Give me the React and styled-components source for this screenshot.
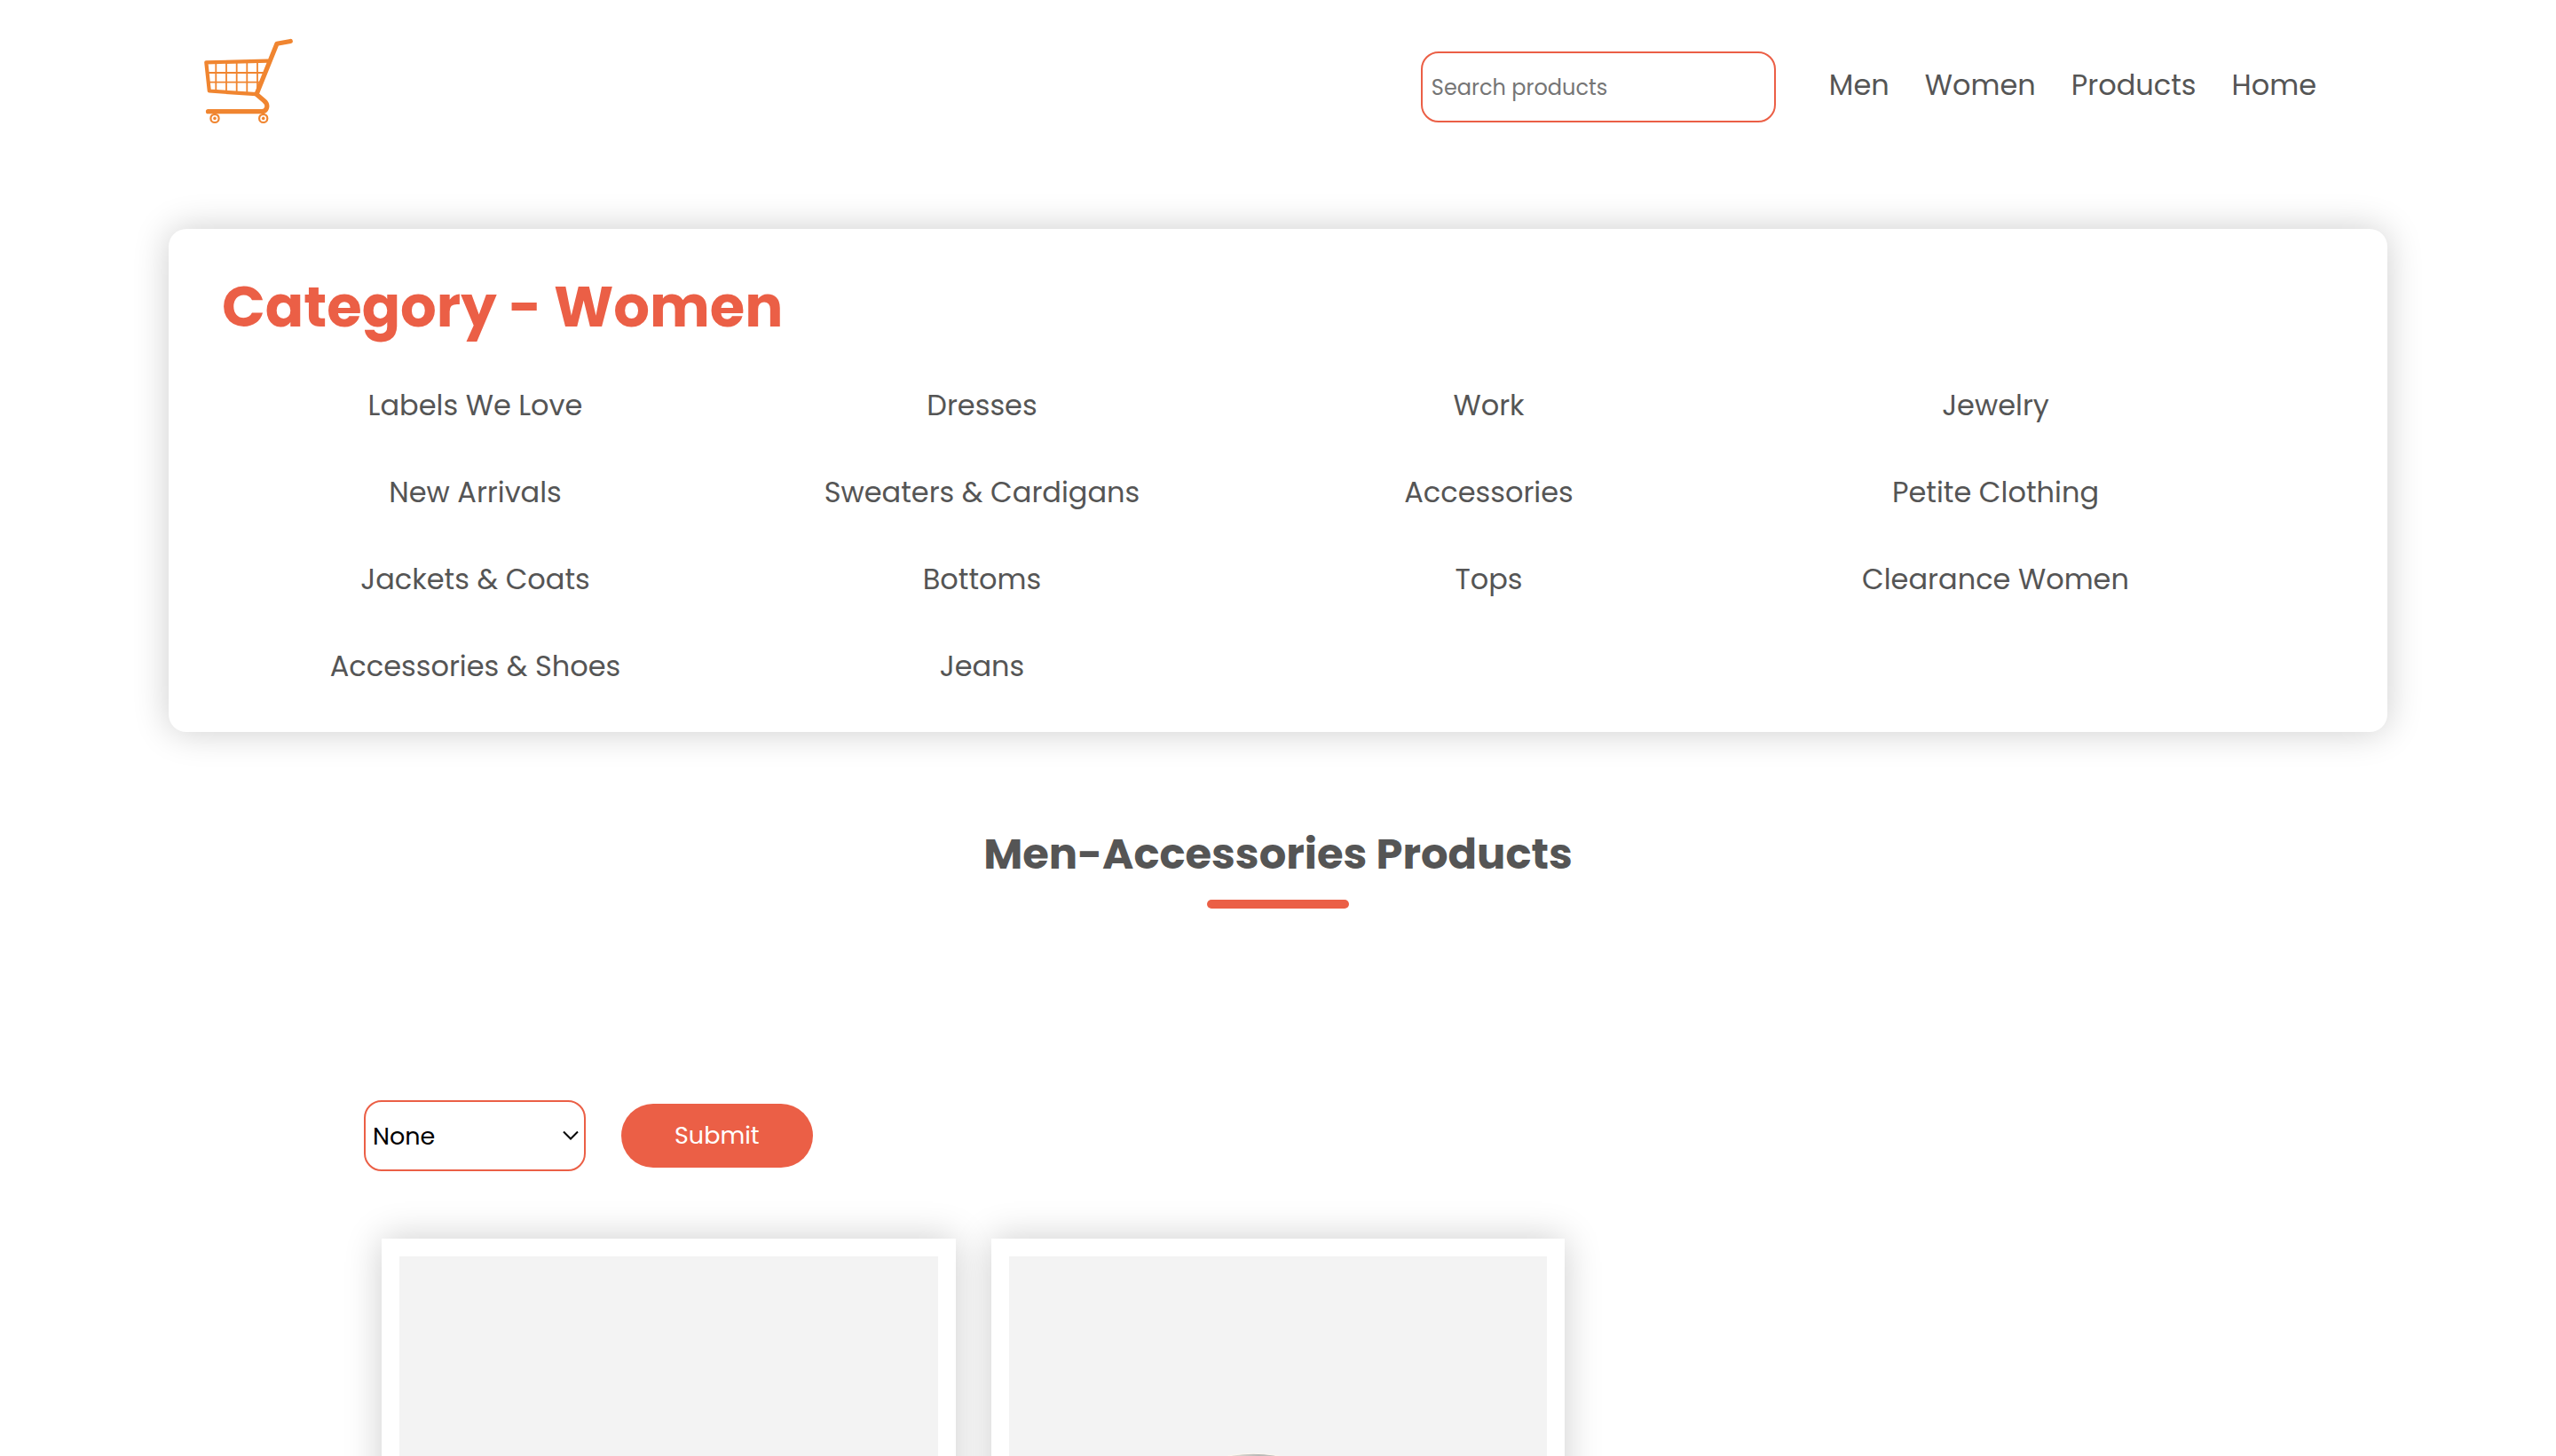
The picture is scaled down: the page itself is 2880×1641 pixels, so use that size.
import React from "react";
import styled, { createGlobalStyle } from "styled-components";

const accent = "#eb5f46";
const ink = "#555";

const GlobalStyle = createGlobalStyle`
  * { box-sizing: border-box; margin: 0; padding: 0; }
  body {
    background: #fff;
    color: ${ink};
    font-family: Poppins, Inter, sans-serif;
    font-size: 32px;
  }
  input, select, button { font-family: inherit; }
`;

const Container = styled.div`
  max-width: ${(p) => (p.$narrow ? "2160px" : "2600px")};
  margin: 0 auto;
  padding: 0 50px;
`;

const Header = styled.header`
  display: flex;
  align-items: center;
  justify-content: space-between;
  padding: 42px 80px 0 40px;
`;

const LogoLink = styled.a`
  display: block;
  line-height: 0;
`;

const HeaderRight = styled.div`
  display: flex;
  align-items: center;
  gap: 60px;
`;

const SearchInput = styled.input`
  width: 400px;
  height: 80px;
  padding: 0 10px;
  border: 2px solid ${accent};
  border-radius: 20px;
  background: #fff;
  color: ${ink};
  font-size: 24px;
  &::placeholder { color: #757575; opacity: 1; }
`;

const NavList = styled.ul`
  display: flex;
  gap: 40px;
  padding-bottom: 4px;
  list-style: none;
`;

const TextLink = styled.a`
  color: ${ink};
  font-size: 32px;
  line-height: 48px;
  text-decoration: none;
`;

const Panel = styled.section`
  margin-top: 104px;
  padding: 40px 60px 50px;
  border-radius: 20px;
  background: #fff;
  box-shadow: 0 0 40px rgba(0, 0, 0, 0.2);
`;

const PanelTitle = styled.h1`
  color: ${accent};
  font-size: 64px;
  font-weight: 700;
  line-height: 95px;
`;

const CategoryGrid = styled.ul`
  display: grid;
  grid-template-columns: repeat(4, 1fr);
  row-gap: 50px;
  margin-top: 40px;
  padding-right: 96px;
  list-style: none;
  text-align: center;
`;

const CategoryItem = styled.li`
  display: grid;
  height: 48px;
`;

const SectionTitle = styled.h2`
  display: flex;
  flex-direction: column;
  align-items: center;
  gap: 15px;
  margin-top: 102px;
  font-size: 48px;
  font-weight: 700;
  line-height: 72px;
  &::after {
    content: "";
    width: 160px;
    height: 10px;
    border-radius: 5px;
    background: ${accent};
  }
`;

const SortForm = styled.form`
  display: flex;
  align-items: center;
  gap: 40px;
  margin-top: 216px;
`;

const SelectBox = styled.label`
  display: grid;
  grid-template-columns: 250px;
  align-items: center;
  > * { grid-area: 1 / 1; }
  > svg { justify-self: end; margin-right: 8px; pointer-events: none; }
`;

const Select = styled.select`
  height: 80px;
  padding: 0 8px;
  border: 2px solid ${accent};
  border-radius: 20px;
  background: #fff;
  color: #000;
  font-size: 27px;
  appearance: none;
`;

const SubmitButton = styled.button`
  height: 72px;
  padding: 0 60px;
  border: 0;
  border-radius: 60px;
  background: ${accent};
  color: #fff;
  font-size: 27px;
`;

const ProductGrid = styled.div`
  display: grid;
  grid-template-columns: repeat(3, 1fr);
  gap: 40px;
  padding: 76px 20px 0;
`;

const ProductCard = styled.article`
  padding: 20px;
  background: #fff;
  box-shadow: 0 0 40px rgba(0, 0, 0, 0.2);
`;

const ProductImage = styled.div`
  aspect-ratio: 1;
  background: #f3f3f3;
  > svg { display: block; width: 100%; height: 100%; }
`;

const categories = [
  "Labels We Love", "Dresses", "Work", "Jewelry",
  "New Arrivals", "Sweaters & Cardigans", "Accessories", "Petite Clothing",
  "Jackets & Coats", "Bottoms", "Tops", "Clearance Women",
  "Accessories & Shoes", "Jeans",
];

const CartLogo = () => (
  <svg width="100" height="112" viewBox="0 0 100 112" fill="none" stroke="#f08530" strokeLinecap="round" strokeLinejoin="round" aria-hidden="true">
    <path strokeWidth="1.8" strokeLinecap="butt" d="M13.3 28.5V61M25 28.5V62M36.7 28V62.5M48.3 28V63M60 27.5V58M3.5 40H68M5 50.7H64" />
    <path strokeWidth="4.2" d="M71.5 26.7L2.3 28.3L5.8 60.5L58.8 64.2" />
    <path strokeWidth="5.2" d="M97.3 4.5L82 7.3L59 64.2L67.5 71.5C73.5 76.5 70.5 83.7 65 83.7H4.5" />
    <circle cx="12" cy="91.4" r="4.6" strokeWidth="2.2" fill="#fff" />
    <circle cx="66.7" cy="91.4" r="4.6" strokeWidth="2.2" fill="#fff" />
    <circle cx="12" cy="91.4" r="1.8" fill="#f08530" stroke="none" />
    <circle cx="66.7" cy="91.4" r="1.8" fill="#f08530" stroke="none" />
  </svg>
);

export default function App() {
  return (
    <>
      <GlobalStyle />
      <Container>
        <Header>
          <LogoLink href="#" aria-label="Store home">
            <CartLogo />
          </LogoLink>
          <HeaderRight>
            <SearchInput type="search" placeholder="Search products" aria-label="Search products" />
            <nav>
              <NavList>
                {["Men", "Women", "Products", "Home"].map((n) => (
                  <li key={n}><TextLink href="#">{n}</TextLink></li>
                ))}
              </NavList>
            </nav>
          </HeaderRight>
        </Header>
        <Panel>
          <PanelTitle>Category - Women</PanelTitle>
          <CategoryGrid>
            {categories.map((c) => (
              <CategoryItem key={c}><TextLink href="#">{c}</TextLink></CategoryItem>
            ))}
          </CategoryGrid>
        </Panel>
      </Container>
      <Container as="main" $narrow>
        <SectionTitle>Men-Accessories Products</SectionTitle>
        <SortForm onSubmit={(e) => e.preventDefault()}>
          <SelectBox>
            <Select aria-label="Sort products" defaultValue="none">
              <option value="none">None</option>
            </Select>
            <svg width="18" height="12" viewBox="0 0 18 12" fill="none" stroke="#000" strokeWidth="2" aria-hidden="true">
              <path d="M1 1.5L9 9.5L17 1.5" />
            </svg>
          </SelectBox>
          <SubmitButton type="submit">Submit</SubmitButton>
        </SortForm>
        <ProductGrid>
          <ProductCard>
            <ProductImage />
          </ProductCard>
          <ProductCard>
            <ProductImage>
              <svg viewBox="0 0 606 606" aria-hidden="true">
                <defs>
                  <linearGradient id="metal" x1="0.25" x2="0.75">
                    <stop offset="0" stopColor="#e9e4dc" />
                    <stop offset="0.6" stopColor="#b9b9b7" />
                    <stop offset="1" stopColor="#c6c4c0" />
                  </linearGradient>
                </defs>
                <ellipse cx="275" cy="246" rx="60" ry="24" fill="url(#metal)" stroke="#fdf8f1" strokeWidth="1" />
              </svg>
            </ProductImage>
          </ProductCard>
        </ProductGrid>
      </Container>
    </>
  );
}
